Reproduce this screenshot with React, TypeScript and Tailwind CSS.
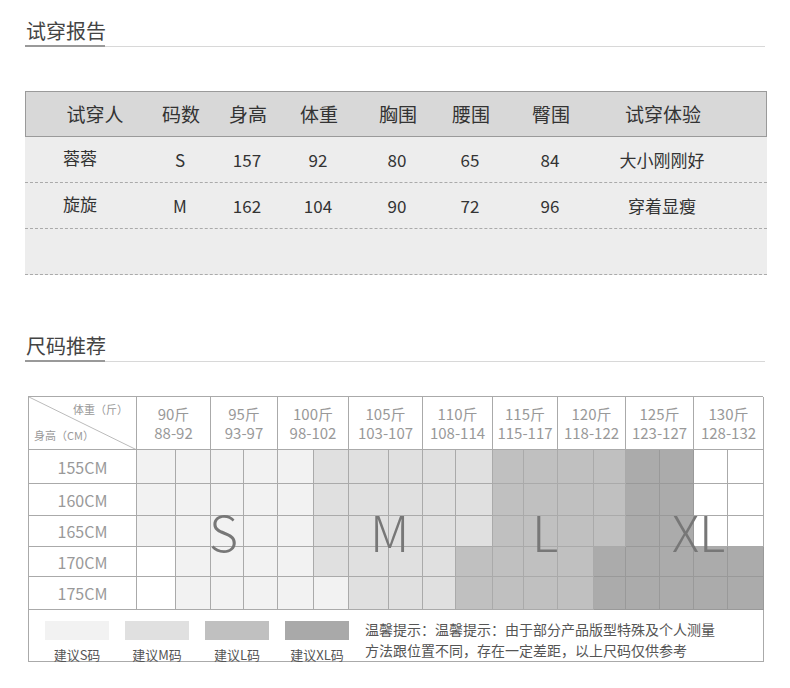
const font = { fontFamily: '"Noto Sans CJK SC", "Noto Sans", sans-serif' };

const trialHead = ["试穿人", "码数", "身高", "体重", "胸围", "腰围", "臀围", "试穿体验"];
const trialRows = [
  ["蓉蓉", "S", "157", "92", "80", "65", "84", "大小刚刚好"],
  ["旋旋", "M", "162", "104", "90", "72", "96", "穿着显瘦"],
];
const colW = ["w-[126px]", "w-[58px]", "w-[76px]", "w-[66px]", "w-[92px]", "w-[54px]", "w-[106px]", "w-[118px]"];

const weights = [
  ["90斤", "88-92"], ["95斤", "93-97"], ["100斤", "98-102"], ["105斤", "103-107"], ["110斤", "108-114"],
  ["115斤", "115-117"], ["120斤", "118-122"], ["125斤", "123-127"], ["130斤", "128-132"],
];
const heights = ["155CM", "160CM", "165CM", "170CM", "175CM"];

const C: Record<string, string> = { w: "bg-white", s: "bg-[#f2f2f2]", m: "bg-[#e0e0e0]", l: "bg-[#c0c0c0]", x: "bg-[#ababab]" };
const grid = [
  "sssssmmmmmllllxxww",
  "sssssmmmmmllllxxww",
  "sssssmmmmmllllxxww",
  "wssssmmmmllllxxxxx",
  "wsssssmmmllllxxxxx",
];

function Title({ text }: { text: string }) {
  return (
    <div className="relative border-b border-[#d8d8d8] pb-[2px]">
      <div className="text-[20px] leading-[26px] text-[#444] pl-[1px]">{text}</div>
      <div className="absolute left-0 -bottom-[1px] h-[2px] w-[80px] bg-[#999]" />
    </div>
  );
}

export default function App() {
  return (
    <div style={font} className="w-[790px] h-[688px] bg-white px-[25px] pt-[18px]">
      <Title text="试穿报告" />
      <div className="mt-[44px] w-[742px]">
        <div className="flex h-[46px] items-center bg-[#d8d8d8] border border-[#9a9a9a] text-[19px] text-[#333]">
          {trialHead.map((h, i) => (
            <div key={i} className={`${colW[i]} text-center ${i === 0 ? "pl-[12px]" : ""}`}>{h}</div>
          ))}
        </div>
        {[...trialRows, null].map((r, ri) => (
          <div key={ri} className="flex h-[46px] items-center bg-[#ededed] border-b border-dashed border-[#aaa] text-[17px] text-[#333]">
            {r && r.map((c, i) => (
              <div key={i} className={`${colW[i]} text-center ${i === 0 ? "pr-[16px] -mt-[4px]" : ""}`}>{c}</div>
            ))}
          </div>
        ))}
      </div>

      <div className="mt-[58px]"><Title text="尺码推荐" /></div>

      <div className="relative mt-[34px] ml-[3px] w-[735px] border-l border-t border-[#aaa] grid grid-cols-[108px_39px_35px_33px_34px_36px_35px_40px_34px_33px_37px_31px_34px_36px_32px_34px_34px_34px_36px] grid-rows-[53px_34px_32px_31px_30px_33px_52px]">
        <div className="relative border-r border-b border-[#aaa] overflow-hidden">
          <svg className="absolute inset-0" width="108" height="53"><line x1="0" y1="0" x2="108" y2="53" stroke="#bbb" strokeWidth="1" /></svg>
          <div className="absolute right-[8px] top-[4px] text-[11px] text-[#999]">体重（斤）</div>
          <div className="absolute left-[5px] bottom-[6px] text-[11px] text-[#999]">身高（CM）</div>
        </div>
        {weights.map(([a, b], i) => (
          <div key={i} className="col-span-2 border-r border-b border-[#aaa] flex flex-col items-center justify-center text-[15px] leading-[19px] text-[#999] whitespace-nowrap">
            <div>{a}</div>
            <div>{b}</div>
          </div>
        ))}
        {heights.map((h, ri) => (
          <>
            <div key={h} className="border-r border-b border-[#aaa] flex items-center justify-center text-[16px] text-[#999]">{h}</div>
            {grid[ri].split("").map((c, ci) => (
              <div key={h + ci} className={`${C[c]} border-r border-b ${c === "x" ? "border-[#999]" : "border-[#aaa]"}`} />
            ))}
          </>
        ))}
        <div className="col-span-19 border-r border-b border-[#aaa] flex items-start pt-[11px] pl-[16px]">
          {[["bg-[#f2f2f2]", "建议S码"], ["bg-[#e0e0e0]", "建议M码"], ["bg-[#c0c0c0]", "建议L码"], ["bg-[#a9a9a9]", "建议XL码"]].map(([bg, t], i) => (
            <div key={i} className="flex flex-col items-center w-[64px] mr-[16px] last:mr-[26px]">
              <div className={`${bg} w-[64px] h-[19px]`} />
              <div className="mt-[5px] text-[13px] text-[#555] whitespace-nowrap">{t}</div>
            </div>
          ))}
          <div className="text-[14px] leading-[21px] text-[#555] -mt-[2px] whitespace-nowrap">
            <div>温馨提示：温馨提示：由于部分产品版型特殊及个人测量</div>
            <div>方法跟位置不同，存在一定差距，以上尺码仅供参考</div>
          </div>
        </div>
        <div className="pointer-events-none absolute left-[180px] top-[108px] text-[50px] font-extralight leading-none text-[#777]">S</div>
        <div className="pointer-events-none absolute left-[341px] top-[108px] text-[50px] font-extralight leading-none text-[#777]">M</div>
        <div className="pointer-events-none absolute left-[503px] top-[108px] text-[50px] font-extralight leading-none text-[#777]">L</div>
        <div className="pointer-events-none absolute left-[643px] top-[108px] text-[50px] font-extralight leading-none text-[#777]">XL</div>
      </div>
    </div>
  );
}
